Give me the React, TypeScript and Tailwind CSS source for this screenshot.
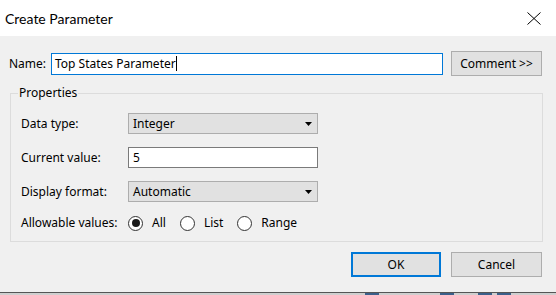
const font = { fontFamily: '"Segoe UI", "Noto Sans", "Liberation Sans", sans-serif' };

function Caret() {
  return (
    <svg width="7" height="4" viewBox="0 0 7 4" className="shrink-0">
      <path d="M0 0h7L3.5 4z" fill="#000" />
    </svg>
  );
}

function CloseIcon() {
  return (
    <svg width="14" height="13" viewBox="0 0 14 13">
      <path d="M0.5 0.5L13.5 12.5M13.5 0.5L0.5 12.5" stroke="#000" strokeWidth="1" fill="none" />
    </svg>
  );
}

function Select({ value }: { value: string }) {
  return (
    <div className="flex h-[21px] w-[190px] items-center justify-between border border-[#adadad] bg-[#e1e1e1] pl-[4px] pr-[5px] text-[12px] text-black">
      <span>{value}</span>
      <Caret />
    </div>
  );
}

function Radio({ label, checked }: { label: string; checked?: boolean }) {
  return (
    <div className="flex items-center gap-[9px]">
      <span className="flex h-[15px] w-[15px] items-center justify-center rounded-full border border-[#333] bg-white">
        {checked && <span className="h-[8px] w-[8px] rounded-full bg-[#1a1a1a]" />}
      </span>
      <span>{label}</span>
    </div>
  );
}

function Row({ label, children }: { label: string; children: React.ReactNode }) {
  return (
    <div className="flex items-center">
      <span className="w-[107px]">{label}</span>
      {children}
    </div>
  );
}

export default function App() {
  return (
    <div className="flex h-[295px] w-[556px] flex-col overflow-hidden bg-[#f0f0f0] text-[12px] text-black" style={font}>
      {/* Title bar */}
      <div className="flex h-[36px] shrink-0 items-center justify-between bg-white pl-[5px] pr-[15px]">
        <span className="text-[14px] font-['Lato',sans-serif]">Create Parameter</span>
        <CloseIcon />
      </div>

      {/* Name row */}
      <div className="mt-[15px] flex items-center pl-[9px] pr-[14px]">
        <span className="w-[42px]">Name:</span>
        <div className="flex h-[22px] w-[392px] items-center border border-[#0078d7] bg-white pl-[3px]">
          <span>Top States Parameter</span>
          <span className="h-[15px] w-[1px] bg-black" />
        </div>
        <button className="ml-[8px] h-[25px] w-[91px] border border-[#adadad] bg-[#e1e1e1] text-[12px]">
          Comment &gt;&gt;
        </button>
      </div>

      {/* Properties group */}
      <div className="relative ml-[10px] mt-[17px] w-[533px] border border-[#dcdcdc] pb-[10px] pl-[10px] pt-[19px]">
        <span className="absolute left-[7px] top-[-9px] bg-[#f0f0f0] px-[1px] leading-[16px]">Properties</span>
        <div className="flex flex-col gap-[13px]">
          <Row label="Data type:">
            <Select value="Integer" />
          </Row>
          <Row label="Current value:">
            <div className="flex h-[21px] w-[190px] items-center border border-[#7a7a7a] bg-white pl-[4px]">5</div>
          </Row>
          <Row label="Display format:">
            <Select value="Automatic" />
          </Row>
          <div className="flex h-[16px] items-center">
            <span className="w-[107px]">Allowable values:</span>
            <div className="flex items-center gap-[14px]">
              <Radio label="All" checked />
              <Radio label="List" />
              <Radio label="Range" />
            </div>
          </div>
        </div>
      </div>

      {/* Buttons */}
      <div className="mt-[10px] flex justify-end gap-[10px] pr-[14px]">
        <button className="h-[25px] w-[90px] border-2 border-[#0078d7] bg-[#e1e1e1] text-[12px]">OK</button>
        <button className="h-[25px] w-[91px] border border-[#adadad] bg-[#e1e1e1] text-[12px]">Cancel</button>
      </div>

      {/* Window edge / taskbar strip */}
      <div className="mt-auto flex h-[3px] shrink-0 border-t border-[#555] bg-[#cfcfcf]">
        <span className="ml-[365px] w-[14px] bg-[#3b5f8a]" />
        <span className="ml-[61px] w-[14px] bg-[#3b5f8a]" />
        <span className="ml-[24px] w-[14px] bg-[#3b5f8a]" />
        <span className="ml-[5px] w-[14px] bg-[#3b5f8a]" />
      </div>
    </div>
  );
}
